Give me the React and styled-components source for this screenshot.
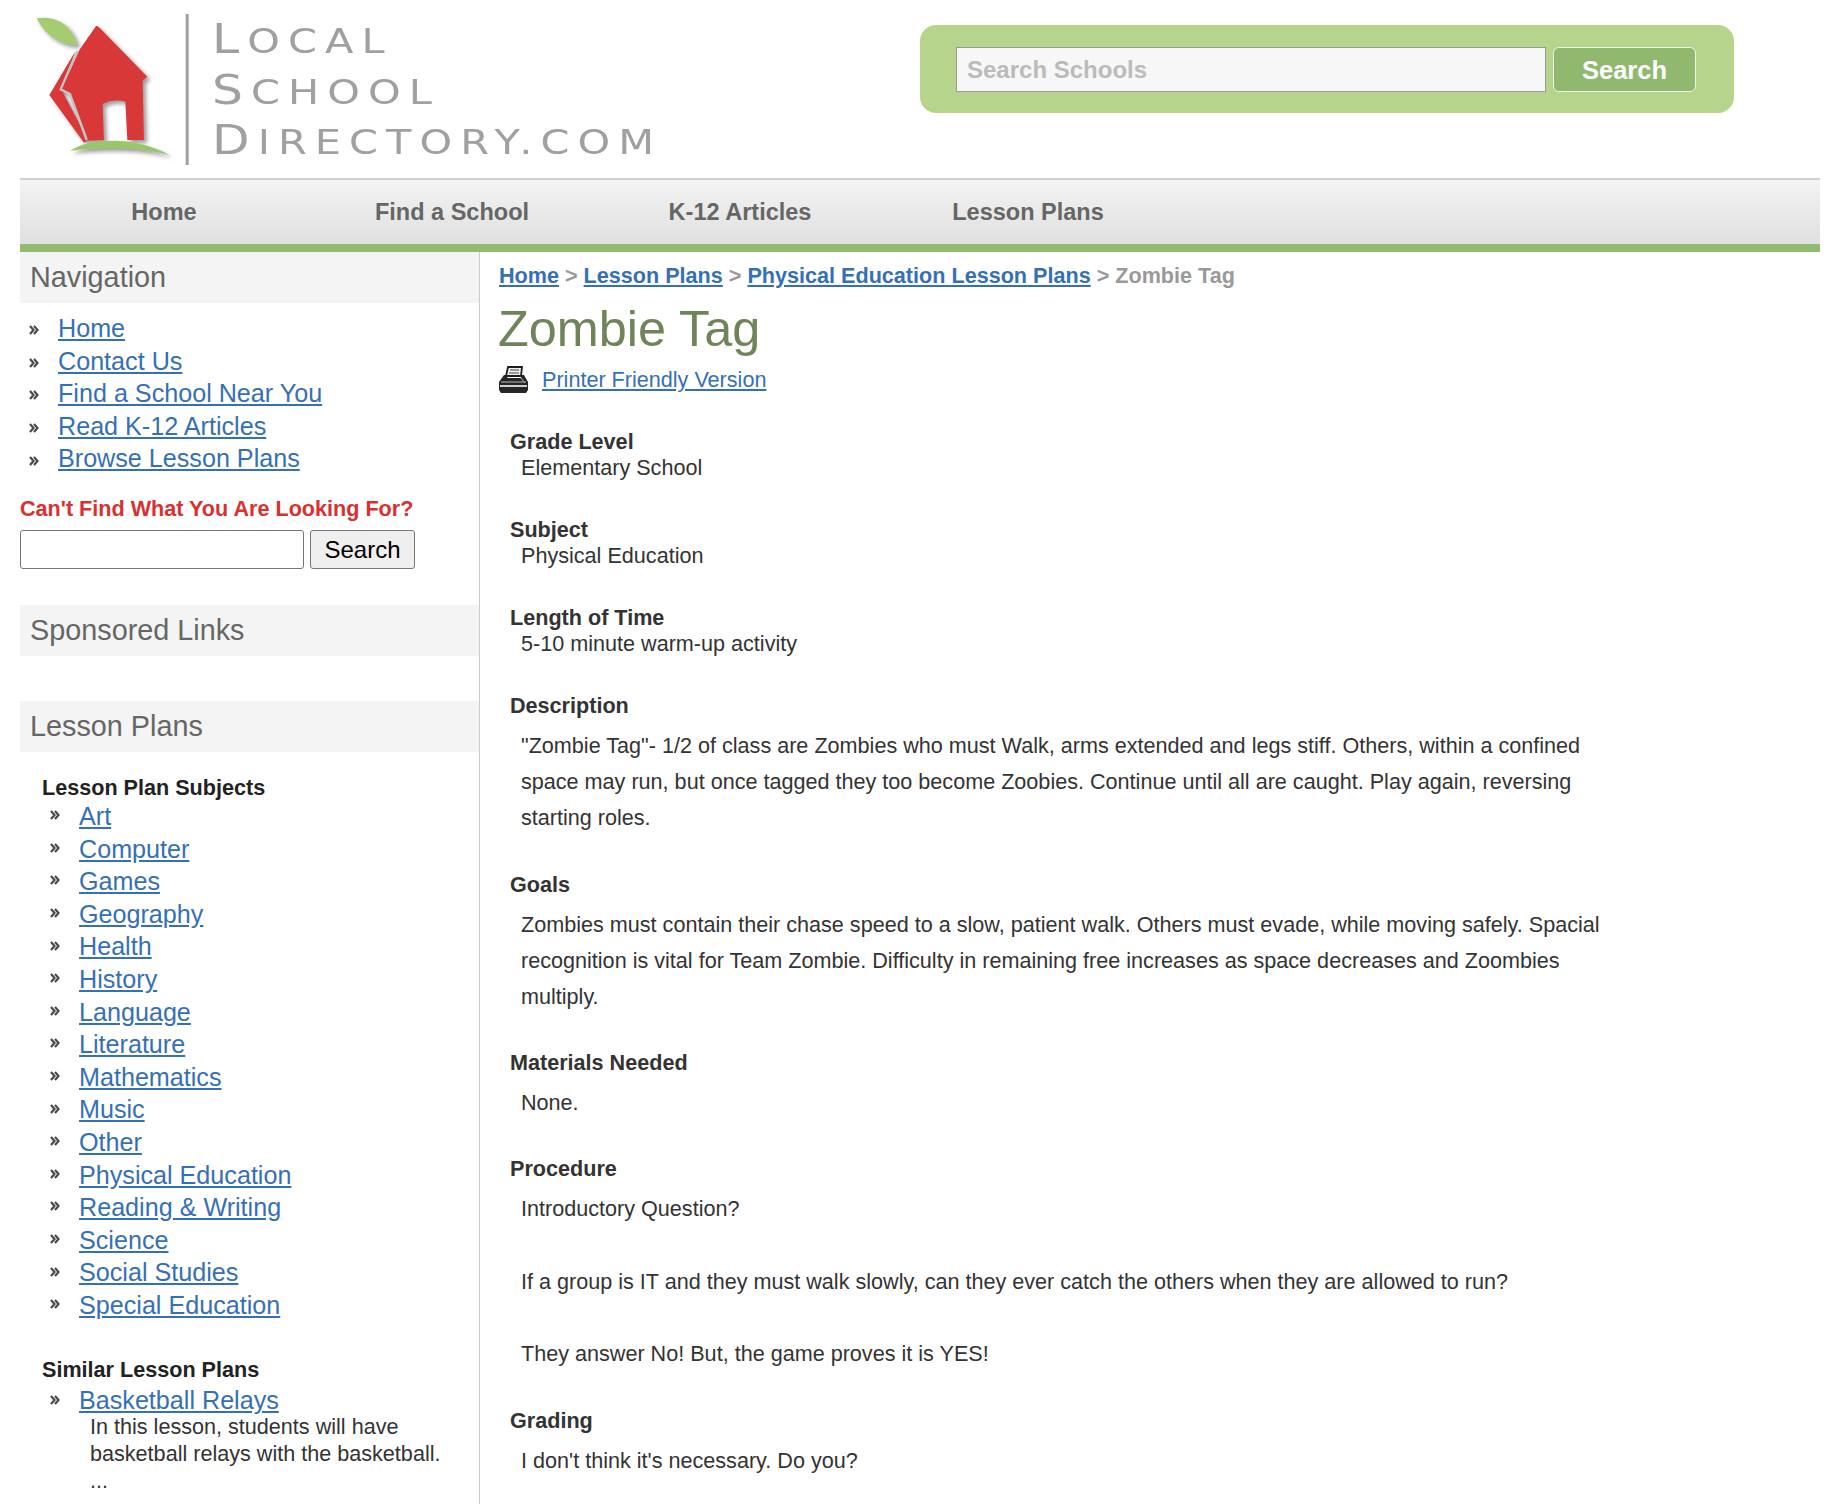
import React from 'react';
import styled, { createGlobalStyle } from 'styled-components';

const GlobalStyle = createGlobalStyle`
    html, body {
        margin: 0;
        background: #fff;
    }
    body {
        font-family: "Liberation Sans", Arial, sans-serif;
        color: #333;
    }
    a {
        color: #3570b5;
    }
`

const Page = styled.div`
    height: 1504px;
    overflow: hidden;
    padding: 0 16px 0 20px;
`

const Header = styled.header`
    align-items: flex-start;
    display: flex;
    height: 178px;
`

const LogoMark = styled.svg`
    flex: none;
    height: 175px;
    width: 170px;
`

const LogoText = styled.div`
    color: #a0a0a0;
    flex: none;
    font-family: "DejaVu Sans", sans-serif;
    font-size: 34px;
    letter-spacing: 6.6px;
    line-height: 50.5px;
    margin-left: 22px;
    margin-top: 16px;
    text-transform: uppercase;
    transform: scaleX(1.22);
    transform-origin: left top;
    width: 500px;
`

const LogoCap = styled.span`
    font-size: 40px;
    line-height: 0;
`

const SearchBand = styled.form`
    align-items: center;
    background: #b7d48c;
    border-radius: 16px;
    box-sizing: border-box;
    display: flex;
    flex: none;
    gap: 7px;
    height: 88px;
    margin-left: 208px;
    margin-top: 25px;
    padding: 0 38px 0 36px;
    width: 814px;
`

const SearchField = styled.div`
    background: #f7f7f7;
    border: 1px solid #999;
    box-sizing: border-box;
    color: #bbb;
    font-size: 24px;
    font-weight: 700;
    height: 45px;
    line-height: 43px;
    padding-left: 10px;
    width: 590px;
`

const SearchButton = styled.div`
    background: #91b86f;
    border: 1px solid #eef5e4;
    border-radius: 6px;
    box-sizing: border-box;
    color: #fff;
    font-size: 25.5px;
    font-weight: 700;
    height: 45px;
    line-height: 44px;
    text-align: center;
    width: 143px;
`

const NavBar = styled.nav`
    background: linear-gradient(#f3f3f3, #e0e0e0);
    border-bottom: 8px solid #93ba6e;
    border-top: 2px solid #cfcfcf;
    display: flex;
    height: 64px;
`

const NavItem = styled.a`
    color: #666;
    font-size: 23.5px;
    font-weight: 700;
    line-height: 64px;
    text-align: center;
    width: 288px;
`

const Columns = styled.div`
    display: flex;
`

const Sidebar = styled.aside`
    border-right: 1px solid #ccc;
    flex: none;
    padding-bottom: 40px;
    width: 459px;
`

const SideHeading = styled.h2`
    background: #f4f4f4;
    color: #666;
    font-size: 28.8px;
    font-weight: 400;
    height: 51px;
    line-height: 51px;
    margin: ${p => p.$top || 0}px 0 0;
    padding-left: 10px;
`

const NavList = styled.ul`
    font-size: 25.15px;
    line-height: 32.6px;
    list-style: none;
    margin: ${p => p.$top}px 0 0;
    padding: 0 0 0 ${p => p.$left}px;
`

const NavRow = styled.li`
    align-items: center;
    display: flex;
`

const Bullet = styled.svg`
    flex: none;
    height: 12px;
    margin-right: 19px;
    margin-top: ${p => p.$drop}px;
    width: 10px;
`

const Alert = styled.h3`
    color: #d93030;
    font-size: 21.6px;
    font-weight: 700;
    line-height: 26px;
    margin: 21px 0 0;
`

const SideSearch = styled.div`
    display: flex;
    gap: 6px;
    margin-top: 8px;
`

const SideInput = styled.div`
    background: #fff;
    border: 1px solid #767676;
    border-radius: 3px;
    box-sizing: border-box;
    height: 39px;
    width: 284px;
`

const SideButton = styled.div`
    background: #efefef;
    border: 1px solid #767676;
    border-radius: 3px;
    box-sizing: border-box;
    color: #000;
    font-size: 24px;
    height: 39px;
    line-height: 38px;
    text-align: center;
    width: 105px;
`

const SubHead = styled.h4`
    color: #222;
    font-size: 21.6px;
    font-weight: 700;
    line-height: 26px;
    margin: ${p => p.$top}px 0 0 22px;
`

const Blurb = styled.p`
    color: #333;
    font-size: 21.6px;
    line-height: 27px;
    margin: -4px 0 0 70px;
`

const Main = styled.main`
    flex: 1;
    padding: 0 0 0 19px;
`

const Crumbs = styled.div`
    color: #999;
    font-size: 21.6px;
    font-weight: 700;
    line-height: 26px;
    margin-top: 11px;
`

const Title = styled.h1`
    color: #6f8459;
    font-size: 50.4px;
    font-weight: 400;
    line-height: 58px;
    margin: 11px 0 0 -1px;
`

const PrintRow = styled.div`
    align-items: center;
    display: flex;
    font-size: 21.6px;
    gap: 14px;
    line-height: 26px;
    margin-top: 8px;
`

const PrintIcon = styled.svg`
    flex: none;
    height: 27px;
    width: 29px;
`

const Block = styled.section`
    margin: ${p => p.$top || 0}px 0 0 11px;
`

const Label = styled.h5`
    color: #333;
    font-size: 21.6px;
    font-weight: 700;
    line-height: 26px;
    margin: 0;
`

const Value = styled.div`
    font-size: 21.6px;
    line-height: 26px;
    margin-left: 11px;
`

const Para = styled.p`
    font-size: 21.6px;
    line-height: 36.2px;
    margin: 9px 0 0 22px;
    max-width: 1090px;
`

const Chevrons = ({ drop }) => (
    <Bullet viewBox="0 0 10 12" $drop={drop}>
        <path d="M1 2l3.5 4L1 10M5 2l3.5 4L5 10" fill="none" stroke="#4a4a4a" strokeWidth="2.2" />
    </Bullet>
)

const Link = ({ children }) => <a href="#">{children}</a>

const subjects = ['Art', 'Computer', 'Games', 'Geography', 'Health', 'History', 'Language', 'Literature', 'Mathematics', 'Music', 'Other', 'Physical Education', 'Reading & Writing', 'Science', 'Social Studies', 'Special Education'];
const navLinks = ['Home', 'Contact Us', 'Find a School Near You', 'Read K-12 Articles', 'Browse Lesson Plans'];

export default function App() {
    return (
        <Page>
            <GlobalStyle />
            <Header>
                <LogoMark viewBox="0 0 510 525">
                    <defs>
                        <filter id="logoShadow" x="-20%" y="-20%" width="140%" height="140%">
                            <feDropShadow dx="9" dy="9" stdDeviation="6" floodColor="#777" floodOpacity="0.75" />
                        </filter>
                    </defs>
                    <g filter="url(#logoShadow)">
                        <path d="M50 55C95 48 150 62 172 135C120 135 75 105 50 55z" fill="#a5cd6f" />
                        <path d="M165 155L88 285L192 428L205 420L130 280z" fill="#d93838" />
                        <path d="M228 78Q233 76 240 85L382 230L368 242L372 420L322 420L316 305Q280 296 248 312L252 420L205 422L150 280L125 268L178 150z" fill="#d93838" />
                        <path d="M150 452C210 412 350 408 448 465C350 438 230 442 150 452z" fill="#9ac66b" />
                    </g>
                    <path d="M172 152L122 268L150 282L200 420" fill="none" stroke="#c4c4c4" strokeWidth="7" />
                    <rect x="497" y="42" width="9" height="453" fill="#a0a0a0" />
                </LogoMark>
                <LogoText>
                    <LogoCap>L</LogoCap>ocal<br />
                    <LogoCap>S</LogoCap>chool<br />
                    <LogoCap>D</LogoCap>irectory.com
                </LogoText>
                <SearchBand>
                    <SearchField>Search Schools</SearchField>
                    <SearchButton>Search</SearchButton>
                </SearchBand>
            </Header>
            <NavBar>
                <NavItem>Home</NavItem>
                <NavItem>Find a School</NavItem>
                <NavItem>K-12 Articles</NavItem>
                <NavItem>Lesson Plans</NavItem>
            </NavBar>
            <Columns>
                <Sidebar>
                    <SideHeading>Navigation</SideHeading>
                    <NavList $top={9} $left={9}>
                        {navLinks.map(l => (
                            <NavRow key={l}><Chevrons drop={4} /><Link>{l}</Link></NavRow>
                        ))}
                    </NavList>
                    <Alert>Can't Find What You Are Looking For?</Alert>
                    <SideSearch>
                        <SideInput />
                        <SideButton>Search</SideButton>
                    </SideSearch>
                    <SideHeading $top={36}>Sponsored Links</SideHeading>
                    <SideHeading $top={45}>Lesson Plans</SideHeading>
                    <SubHead $top={23}>Lesson Plan Subjects</SubHead>
                    <NavList $top={-1} $left={30}>
                        {subjects.map(l => (
                            <NavRow key={l}><Chevrons drop={-2} /><Link>{l}</Link></NavRow>
                        ))}
                    </NavList>
                    <SubHead $top={36}>Similar Lesson Plans</SubHead>
                    <NavList $top={1} $left={30}>
                        <NavRow><Chevrons drop={-2} /><Link>Basketball Relays</Link></NavRow>
                    </NavList>
                    <Blurb>In this lesson, students will have<br />basketball relays with the basketball.<br />...</Blurb>
                </Sidebar>
                <Main>
                    <Crumbs><Link>Home</Link> &gt; <Link>Lesson Plans</Link> &gt; <Link>Physical Education Lesson Plans</Link> &gt; Zombie Tag</Crumbs>
                    <Title>Zombie Tag</Title>
                    <PrintRow>
                        <PrintIcon viewBox="0 0 29 27">
                            <path d="M9 1h14l-1 9H7z" fill="#eee" stroke="#1c1c1c" strokeWidth="1.8" />
                            <path d="M11 4h9M10 7h10" stroke="#444" strokeWidth="1.2" />
                            <path d="M5 9h4l-1 3h14l1-3h2l4 7v8l-2 3H2l-2-3v-8z" fill="#262626" />
                            <path d="M2 16h25" stroke="#8a8a8a" strokeWidth="1.5" />
                            <path d="M1 20h27" stroke="#d0d0d0" strokeWidth="2" />
                            <path d="M22 12l4 5" stroke="#9a9a9a" strokeWidth="1.2" />
                        </PrintIcon>
                        <Link>Printer Friendly Version</Link>
                    </PrintRow>
                    <Block $top={36}>
                        <Label>Grade Level</Label>
                        <Value>Elementary School</Value>
                    </Block>
                    <Block $top={36}>
                        <Label>Subject</Label>
                        <Value>Physical Education</Value>
                    </Block>
                    <Block $top={36}>
                        <Label>Length of Time</Label>
                        <Value>5-10 minute warm-up activity</Value>
                    </Block>
                    <Block $top={36}>
                        <Label>Description</Label>
                    </Block>
                    <Para>"Zombie Tag"- 1/2 of class are Zombies who must Walk, arms extended and legs stiff. Others, within a confined space may run, but once tagged they too become Zoobies. Continue until all are caught. Play again, reversing starting roles.</Para>
                    <Block $top={35}>
                        <Label>Goals</Label>
                    </Block>
                    <Para>Zombies must contain their chase speed to a slow, patient walk. Others must evade, while moving safely. Spacial recognition is vital for Team Zombie. Difficulty in remaining free increases as space decreases and Zoombies multiply.</Para>
                    <Block $top={35}>
                        <Label>Materials Needed</Label>
                    </Block>
                    <Para>None.</Para>
                    <Block $top={35}>
                        <Label>Procedure</Label>
                    </Block>
                    <Para>Introductory Question?<br /><br />If a group is IT and they must walk slowly, can they ever catch the others when they are allowed to run?<br /><br />They answer No! But, the game proves it is YES!</Para>
                    <Block $top={36}>
                        <Label>Grading</Label>
                    </Block>
                    <Para>I don't think it's necessary. Do you?</Para>
                </Main>
            </Columns>
        </Page>
    );
}
